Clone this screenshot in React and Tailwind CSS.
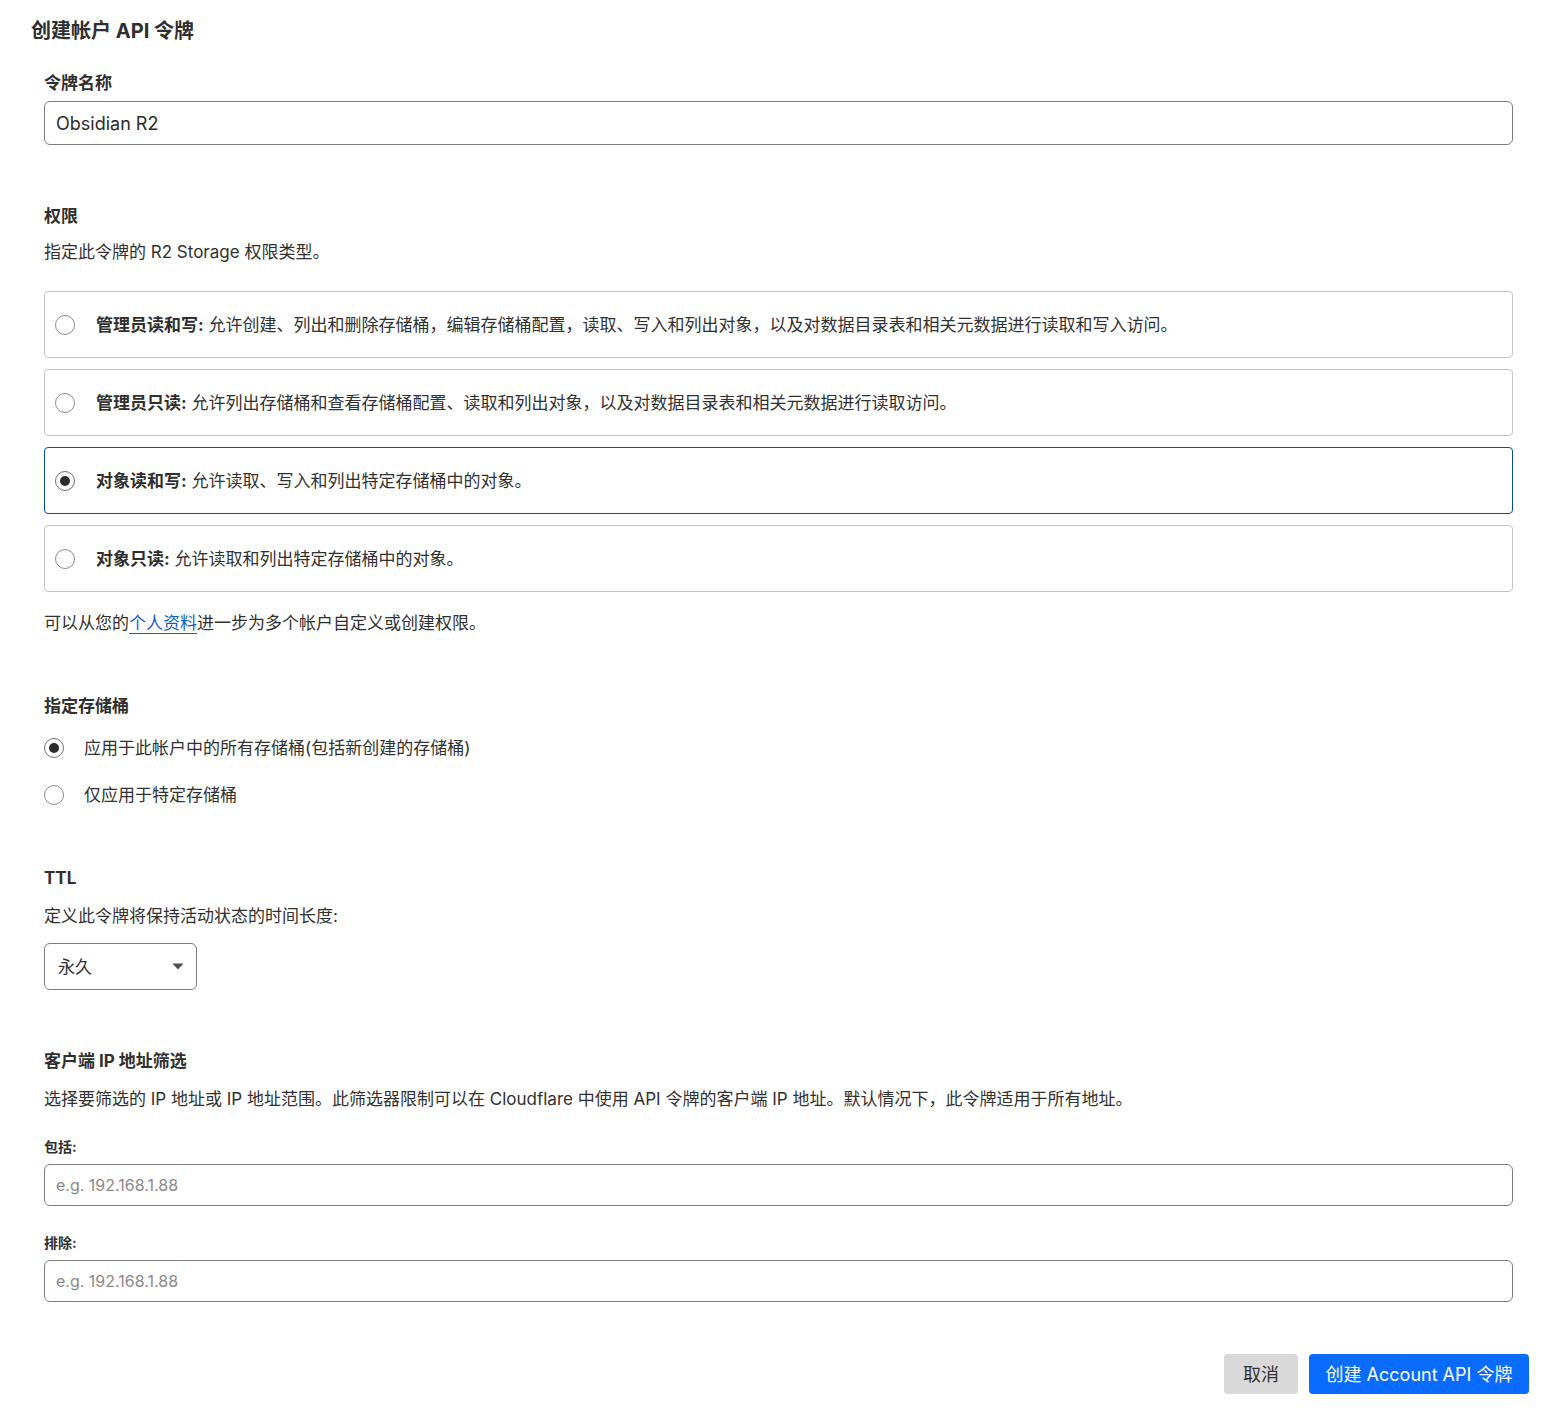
import React, { useState } from 'react';

const font = { fontFamily: 'Inter, "Noto Sans CJK SC", sans-serif' };

const permissions = [
  {
    id: 'admin-rw',
    title: '管理员读和写:',
    desc: '允许创建、列出和删除存储桶，编辑存储桶配置，读取、写入和列出对象，以及对数据目录表和相关元数据进行读取和写入访问。',
  },
  {
    id: 'admin-r',
    title: '管理员只读:',
    desc: '允许列出存储桶和查看存储桶配置、读取和列出对象，以及对数据目录表和相关元数据进行读取访问。',
  },
  { id: 'obj-rw', title: '对象读和写:', desc: '允许读取、写入和列出特定存储桶中的对象。' },
  { id: 'obj-r', title: '对象只读:', desc: '允许读取和列出特定存储桶中的对象。' },
];

function Radio({ checked }) {
  return (
    <span
      className={
        'flex h-[20px] w-[20px] shrink-0 items-center justify-center rounded-full border bg-white ' +
        (checked ? 'border-[#6f6f6f]' : 'border-[#8c8c8c]')
      }
    >
      {checked && <span className="h-[10px] w-[10px] rounded-full bg-[#2b2b2b]" />}
    </span>
  );
}

function SectionTitle({ children, className = '' }) {
  return <h2 className={'text-[17px] font-bold leading-[24px] text-[#2f2f2f] ' + className}>{children}</h2>;
}

export default function App() {
  const [perm, setPerm] = useState('obj-rw');
  const [scope, setScope] = useState('all');

  return (
    <div className="min-h-[1416px] bg-white pb-[21px] pl-[31px] pr-[34px] pt-[17px] text-[#313131]" style={font}>
      <h1 className="text-[20px] font-bold leading-[28px] text-[#2f2f2f]">创建帐户 API 令牌</h1>

      <div className="pl-[13px] pr-[16px]">
        <SectionTitle className="mt-[26px]">令牌名称</SectionTitle>
        <input
          defaultValue="Obsidian R2"
          className="mt-[6px] h-[44px] w-full rounded-[6px] border border-[#7d7d7d] px-[11px] text-[18px] text-[#2b2b2b] outline-none"
          style={font}
        />

        <SectionTitle className="mt-[59px]">权限</SectionTitle>
        <p className="mt-[12px] text-[17px] leading-[24px]">指定此令牌的 R2 Storage 权限类型。</p>

        <div className="mt-[27px] flex flex-col gap-[11px]">
          {permissions.map((p) => {
            const on = perm === p.id;
            return (
              <label
                key={p.id}
                onClick={() => setPerm(p.id)}
                className={
                  'flex h-[67px] cursor-pointer items-center gap-[21px] rounded-[4px] border pl-[10px] ' +
                  (on ? 'border-[#0a4aa0]' : 'border-[#c4c4c4]')
                }
              >
                <Radio checked={on} />
                <span className="text-[17px] leading-[24px]">
                  <b className="font-bold text-[#2f2f2f]">{p.title}</b> {p.desc}
                </span>
              </label>
            );
          })}
        </div>

        <p className="mt-[19px] text-[17px] leading-[24px]">
          可以从您的
          <a href="#" className="text-[#0b5fce] underline decoration-[#0b5fce] underline-offset-[4px]">
            个人资料
          </a>
          进一步为多个帐户自定义或创建权限。
        </p>

        <SectionTitle className="mt-[59px]">指定存储桶</SectionTitle>
        <div className="mt-[18px] flex flex-col gap-[23px]">
          {[
            ['all', '应用于此帐户中的所有存储桶(包括新创建的存储桶)'],
            ['some', '仅应用于特定存储桶'],
          ].map(([id, text]) => (
            <label key={id} onClick={() => setScope(id)} className="flex cursor-pointer items-center gap-[20px]">
              <Radio checked={scope === id} />
              <span className="text-[17px] leading-[24px]">{text}</span>
            </label>
          ))}
        </div>

        <SectionTitle className="mt-[59px]">TTL</SectionTitle>
        <p className="mt-[14px] text-[17px] leading-[24px]">定义此令牌将保持活动状态的时间长度:</p>
        <div className="mt-[15px] flex h-[47px] w-[153px] items-center justify-between rounded-[6px] border border-[#7d7d7d] pl-[13px] pr-[12px]">
          <span className="text-[17px] leading-[24px]">永久</span>
          <svg width="12" height="7" viewBox="0 0 12 7">
            <path d="M0.5 0.5h11L6 6.5z" fill="#4a4f55" />
          </svg>
        </div>

        <SectionTitle className="mt-[59px]">客户端 IP 地址筛选</SectionTitle>
        <p className="mt-[14px] text-[17px] leading-[24px]">
          选择要筛选的 IP 地址或 IP 地址范围。此筛选器限制可以在 Cloudflare 中使用 API 令牌的客户端 IP 地址。默认情况下，此令牌适用于所有地址。
        </p>

        <p className="mt-[26px] text-[14px] font-bold leading-[20px] text-[#2f2f2f]">包括:</p>
        <input
          placeholder="e.g. 192.168.1.88"
          className="mt-[7px] h-[42px] w-full rounded-[6px] border border-[#7d7d7d] px-[11px] text-[16px] outline-none placeholder:text-[#8a8a8a]"
          style={font}
        />

        <p className="mt-[27px] text-[14px] font-bold leading-[20px] text-[#2f2f2f]">排除:</p>
        <input
          placeholder="e.g. 192.168.1.88"
          className="mt-[7px] h-[42px] w-full rounded-[6px] border border-[#7d7d7d] px-[11px] text-[16px] outline-none placeholder:text-[#8a8a8a]"
          style={font}
        />
      </div>

      <div className="mt-[52px] flex justify-end gap-[11px]">
        <button className="h-[40px] w-[74px] rounded-[4px] bg-[#d9d9d9] text-[18px] text-[#333]" style={font}>
          取消
        </button>
        <button className="h-[40px] w-[220px] rounded-[4px] bg-[#0a6cff] text-[18px] text-white" style={font}>
          创建 Account API 令牌
        </button>
      </div>
    </div>
  );
}
